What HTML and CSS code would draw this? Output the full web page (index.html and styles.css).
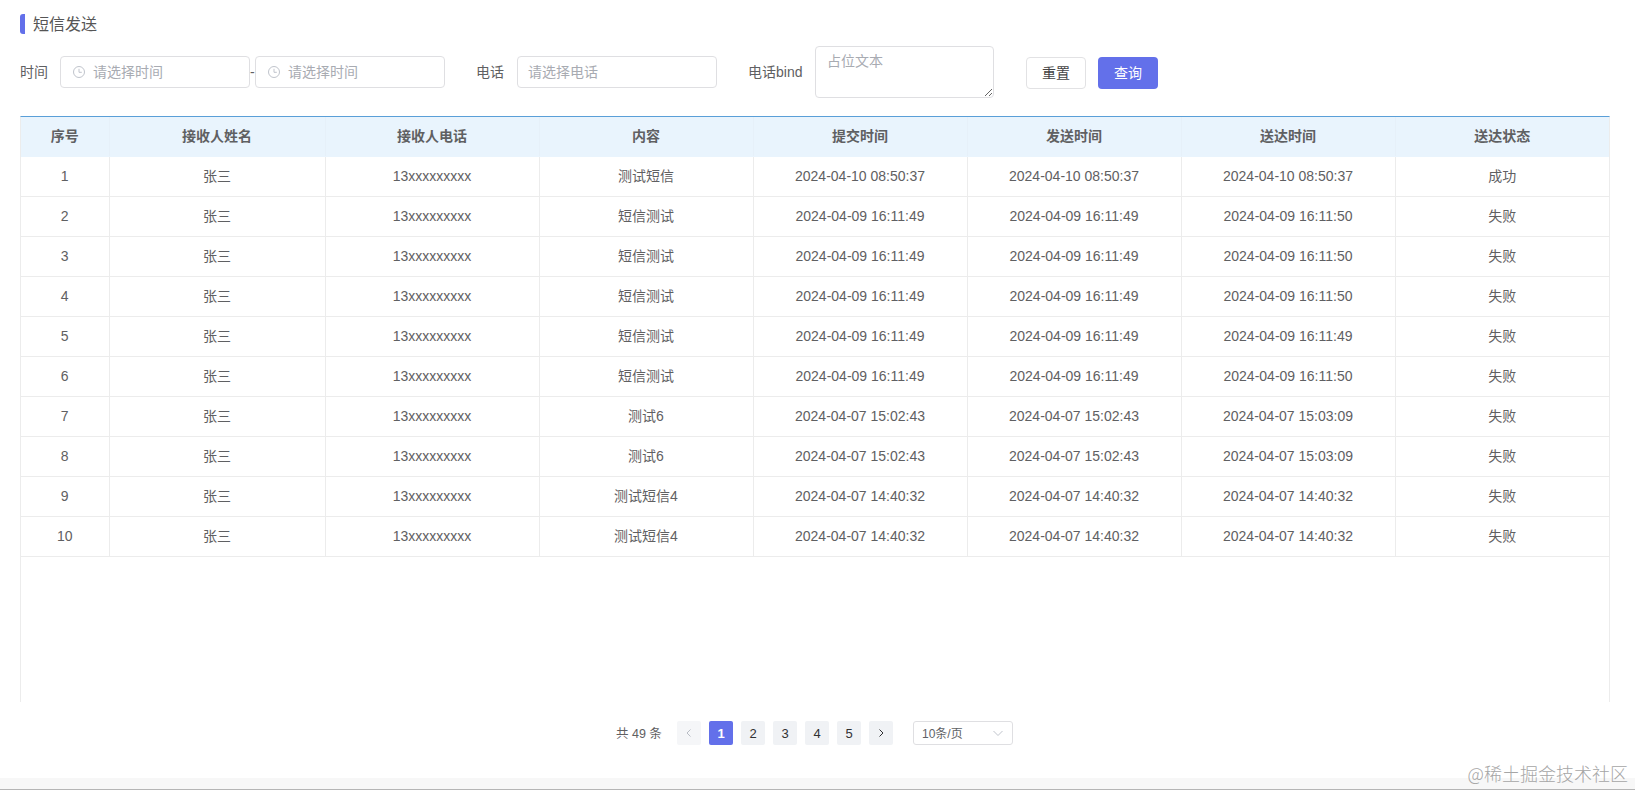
FILE: index.html
```html
<!DOCTYPE html>
<html lang="zh-CN">
<head>
<meta charset="utf-8">
<title>短信发送</title>
<link rel="stylesheet" href="styles.css">
</head>
<body>
<div class="page">
  <main class="content">
    <h1 class="title">短信发送</h1>
    <form class="filters">
      <label class="label label-time">时间</label>
      <div class="field field-time">
        <svg class="clock" viewBox="0 0 14 14"><circle cx="7" cy="7" r="5.5"/><path d="M7 3.8V7.3H9.800"/></svg>
        <span class="ph">请选择时间</span>
      </div>
      <span class="dash">-</span>
      <div class="field field-time">
        <svg class="clock" viewBox="0 0 14 14"><circle cx="7" cy="7" r="5.5"/><path d="M7 3.8V7.3H9.800"/></svg>
        <span class="ph">请选择时间</span>
      </div>
      <label class="label label-phone">电话</label>
      <div class="field field-phone"><span class="ph">请选择电话</span></div>
      <label class="label label-bind">电话bind</label>
      <textarea class="area" placeholder="占位文本"></textarea>
      <button type="button" class="btn btn-reset">重置</button>
      <button type="button" class="btn btn-query">查询</button>
    </form>
    <div class="table-wrap">
      <table class="grid">
        <colgroup>
          <col class="c-no"><col class="c-name"><col class="c-t"><col class="c-t">
          <col class="c-t"><col class="c-t"><col class="c-t"><col>
        </colgroup>
        <thead>
          <tr><th>序号</th><th>接收人姓名</th><th>接收人电话</th><th>内容</th><th>提交时间</th><th>发送时间</th><th>送达时间</th><th>送达状态</th></tr>
        </thead>
        <tbody>
          <tr><td>1</td><td>张三</td><td>13xxxxxxxxx</td><td>测试短信</td><td>2024-04-10 08:50:37</td><td>2024-04-10 08:50:37</td><td>2024-04-10 08:50:37</td><td>成功</td></tr>
          <tr><td>2</td><td>张三</td><td>13xxxxxxxxx</td><td>短信测试</td><td>2024-04-09 16:11:49</td><td>2024-04-09 16:11:49</td><td>2024-04-09 16:11:50</td><td>失败</td></tr>
          <tr><td>3</td><td>张三</td><td>13xxxxxxxxx</td><td>短信测试</td><td>2024-04-09 16:11:49</td><td>2024-04-09 16:11:49</td><td>2024-04-09 16:11:50</td><td>失败</td></tr>
          <tr><td>4</td><td>张三</td><td>13xxxxxxxxx</td><td>短信测试</td><td>2024-04-09 16:11:49</td><td>2024-04-09 16:11:49</td><td>2024-04-09 16:11:50</td><td>失败</td></tr>
          <tr><td>5</td><td>张三</td><td>13xxxxxxxxx</td><td>短信测试</td><td>2024-04-09 16:11:49</td><td>2024-04-09 16:11:49</td><td>2024-04-09 16:11:49</td><td>失败</td></tr>
          <tr><td>6</td><td>张三</td><td>13xxxxxxxxx</td><td>短信测试</td><td>2024-04-09 16:11:49</td><td>2024-04-09 16:11:49</td><td>2024-04-09 16:11:50</td><td>失败</td></tr>
          <tr><td>7</td><td>张三</td><td>13xxxxxxxxx</td><td>测试6</td><td>2024-04-07 15:02:43</td><td>2024-04-07 15:02:43</td><td>2024-04-07 15:03:09</td><td>失败</td></tr>
          <tr><td>8</td><td>张三</td><td>13xxxxxxxxx</td><td>测试6</td><td>2024-04-07 15:02:43</td><td>2024-04-07 15:02:43</td><td>2024-04-07 15:03:09</td><td>失败</td></tr>
          <tr><td>9</td><td>张三</td><td>13xxxxxxxxx</td><td>测试短信4</td><td>2024-04-07 14:40:32</td><td>2024-04-07 14:40:32</td><td>2024-04-07 14:40:32</td><td>失败</td></tr>
          <tr><td>10</td><td>张三</td><td>13xxxxxxxxx</td><td>测试短信4</td><td>2024-04-07 14:40:32</td><td>2024-04-07 14:40:32</td><td>2024-04-07 14:40:32</td><td>失败</td></tr>
        </tbody>
      </table>
    </div>
    <nav class="pager">
      <span class="total">共 49 条</span>
      <span class="pg pg-off"><svg class="chev" viewBox="0 0 12 12"><path d="M7.500 2.500L4 6l3.500 3.500"/></svg></span>
      <span class="pg pg-on">1</span>
      <span class="pg">2</span>
      <span class="pg">3</span>
      <span class="pg">4</span>
      <span class="pg">5</span>
      <span class="pg"><svg class="chev" viewBox="0 0 12 12"><path d="M4.500 2.500L8 6l-3.500 3.500"/></svg></span>
      <span class="size"><span class="size-text">10条/页</span><svg class="caret" viewBox="0 0 12 12"><path d="M1.500 4l4.500 4.500L10.500 4"/></svg></span>
    </nav>
  </main>
  <footer class="strip"></footer>
  <div class="mark">@稀土掘金技术社区</div>
</div>
</body>
</html>
```
FILE: styles.css
```css
* { box-sizing: border-box; }
html, body { margin: 0; padding: 0; background: #fff; }
body {
  font-family: "Liberation Sans", "Noto Sans CJK SC", sans-serif;
  font-size: 14px;
  color: #5f6062;
}
.page {
  position: relative;
  width: 1635px;
  height: 790px;
  overflow: hidden;
  display: flex;
  flex-direction: column;
}
.content { flex: 1; padding: 14px 25px 0 20px; }

.title {
  margin: 0;
  height: 20px;
  padding-left: 8px;
  border-left: 5px solid #6370ea;
  border-radius: 3px;
  font-size: 16px;
  font-weight: 400;
  line-height: 22px;
  color: #555;
}

.filters {
  display: flex;
  align-items: center;
  height: 52px;
  margin-top: 12px;
}
.label { white-space: nowrap; padding-bottom: 2px; }
.label-time { width: 40px; }
.label-phone { margin-left: 31px; width: 41px; }
.label-bind { margin-left: 31px; width: 67px; }
.field {
  display: flex;
  align-items: center;
  height: 32px;
  border: 1px solid #dfdfe2;
  border-radius: 4px;
  background: #fff;
}
.field-time { width: 190px; padding-left: 11px; }
.field-phone { width: 200px; padding-left: 10px; }
.dash { width: 5px; line-height: 1; }
.clock {
  width: 14px;
  height: 14px;
  margin-right: 7px;
  fill: none;
  stroke: #c0c4cc;
  stroke-width: 1;
}
.ph { color: #a8abb2; padding-bottom: 2px; }
.area {
  display: block;
  width: 179px;
  height: 52px;
  padding: 3px 11px;
  border: 1px solid #dfdfe2;
  border-radius: 4px;
  font: inherit;
  color: #606266;
  resize: both;
  outline: none;
}
.area::placeholder { color: #a8abb2; opacity: 1; }
.btn {
  width: 60px;
  height: 32px;
  padding: 0 0 3px;
  margin-top: 2px;
  border-radius: 4px;
  font: inherit;
  cursor: pointer;
}
.btn-reset { margin-left: 32px; border: 1px solid #e2e2e4; background: #fff; color: #444; }
.btn-query { margin-left: 12px; border: 0; background: #6370ea; color: #fff; }

.table-wrap {
  height: 586px;
  margin-top: 18px;
  border-top: 1px solid #5a9fd8;
  border-left: 1px solid #ececec;
  border-right: 1px solid #ececec;
}
.grid {
  width: 100%;
  table-layout: fixed;
  border-collapse: collapse;
}
.c-no { width: 88px; }
.c-name { width: 216px; }
.c-t { width: 214px; }
.grid th, .grid td {
  text-align: center;
  padding: 0;
  border-right: 1px solid #ececec;
  border-bottom: 1px solid #ececec;
}
.grid th:last-child, .grid td:last-child { border-right: 0; }
.grid th {
  height: 39px;
  padding-bottom: 2px;
  background: #e9f4fd;
  font-weight: 700;
  border-right-color: #e6f0f9;
  border-bottom-color: #e9f4fd;
}
.grid td { height: 40px; }
.grid td:nth-child(2), .grid td:nth-child(4), .grid td:nth-child(8) { padding-bottom: 2px; }

.pager {
  display: flex;
  align-items: center;
  height: 24px;
  margin-top: 19px;
  padding-left: 596px;
  gap: 8px;
  font-size: 13px;
}
.total { width: 53px; font-size: 12.500px; padding-bottom: 2px; }
.pg {
  display: flex;
  align-items: center;
  justify-content: center;
  width: 24px;
  height: 24px;
  border-radius: 2px;
  background: #f0f2f5;
  color: #303133;
  font-size: 13px;
}
.pg-off { background: #f5f6f8; }
.pg-on { background: #6370ea; color: #fff; font-weight: 700; }
.chev {
  width: 12px;
  height: 12px;
  fill: none;
  stroke: #303133;
  stroke-width: 1;
}
.pg-off .chev { stroke: #b8bcc4; }
.size {
  display: flex;
  align-items: center;
  justify-content: space-between;
  width: 100px;
  height: 24px;
  margin-left: 12px;
  padding: 0 8px;
  border: 1px solid #dfdfe2;
  border-radius: 3px;
  color: #606266;
  font-size: 12px;
}
.size-text { padding-bottom: 2px; }
.caret {
  width: 12px;
  height: 12px;
  fill: none;
  stroke: #c0c4cc;
  stroke-width: 1;
}

.strip {
  height: 12px;
  background: #f7f7f7;
  border-bottom: 1px solid #b5b5b5;
}
.mark {
  position: absolute;
  right: 7px;
  bottom: 6px;
  font-family: "Noto Sans CJK SC", sans-serif;
  font-size: 18px;
  font-weight: 300;
  line-height: 22px;
  color: #a6a6a6;
  white-space: nowrap;
}
```
